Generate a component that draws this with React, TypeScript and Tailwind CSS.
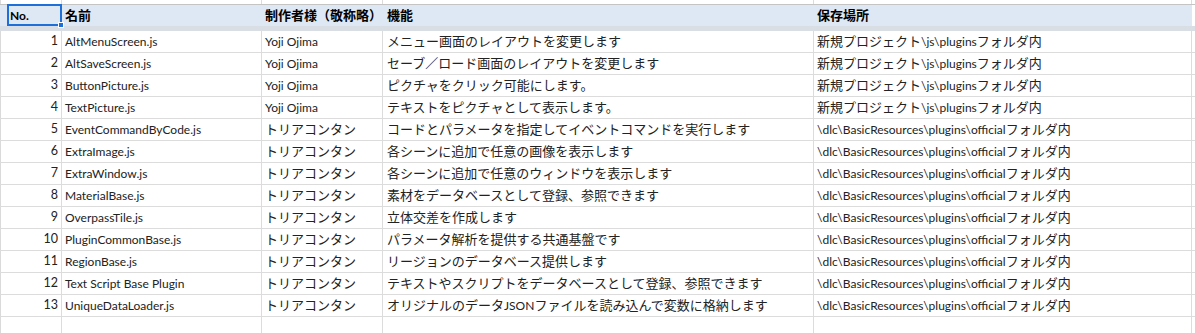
const rows: [string, string, string, string][] = [
  ['AltMenuScreen.js', 'Yoji Ojima', 'メニュー画面のレイアウトを変更します', '新規プロジェクト\\js\\pluginsフォルダ内'],
  ['AltSaveScreen.js', 'Yoji Ojima', 'セーブ／ロード画面のレイアウトを変更します', '新規プロジェクト\\js\\pluginsフォルダ内'],
  ['ButtonPicture.js', 'Yoji Ojima', 'ピクチャをクリック可能にします。', '新規プロジェクト\\js\\pluginsフォルダ内'],
  ['TextPicture.js', 'Yoji Ojima', 'テキストをピクチャとして表示します。', '新規プロジェクト\\js\\pluginsフォルダ内'],
  ['EventCommandByCode.js', 'トリアコンタン', 'コードとパラメータを指定してイベントコマンドを実行します', '\\dlc\\BasicResources\\plugins\\officialフォルダ内'],
  ['ExtraImage.js', 'トリアコンタン', '各シーンに追加で任意の画像を表示します', '\\dlc\\BasicResources\\plugins\\officialフォルダ内'],
  ['ExtraWindow.js', 'トリアコンタン', '各シーンに追加で任意のウィンドウを表示します', '\\dlc\\BasicResources\\plugins\\officialフォルダ内'],
  ['MaterialBase.js', 'トリアコンタン', '素材をデータベースとして登録、参照できます', '\\dlc\\BasicResources\\plugins\\officialフォルダ内'],
  ['OverpassTile.js', 'トリアコンタン', '立体交差を作成します', '\\dlc\\BasicResources\\plugins\\officialフォルダ内'],
  ['PluginCommonBase.js', 'トリアコンタン', 'パラメータ解析を提供する共通基盤です', '\\dlc\\BasicResources\\plugins\\officialフォルダ内'],
  ['RegionBase.js', 'トリアコンタン', 'リージョンのデータベース提供します', '\\dlc\\BasicResources\\plugins\\officialフォルダ内'],
  ['Text Script Base Plugin', 'トリアコンタン', 'テキストやスクリプトをデータベースとして登録、参照できます', '\\dlc\\BasicResources\\plugins\\officialフォルダ内'],
  ['UniqueDataLoader.js', 'トリアコンタン', 'オリジナルのデータJSONファイルを読み込んで変数に格納します', '\\dlc\\BasicResources\\plugins\\officialフォルダ内'],
]

// 列幅（右罫線込み）
const cols = ['w-[61px]', 'w-[200px]', 'w-[121px]', 'w-[431px]', 'w-[378px]']

// 半角部分だけ少し小さく（Meiryo UI 風の幅に寄せる）
function Txt({ s }: { s: string }) {
  return (
    <>
      {s.split(/([\x20-\x7e]+)/).map((p, i) =>
        /^[\x20-\x7e]+$/.test(p) ? (
          <span key={i} className="text-[12px]">{p}</span>
        ) : (
          p
        ),
      )}
    </>
  )
}

function GridRow({ h, children }: { h: string; children?: React.ReactNode[] }) {
  return (
    <div className={`flex ${h} border-l border-[#dadada]`}>
      {cols.map((w, i) => (
        <div key={i} className={`${w} flex-shrink-0 border-r border-[#dcdcdc] flex items-center overflow-hidden whitespace-nowrap`}>
          {children?.[i]}
        </div>
      ))}
    </div>
  )
}

export default function App() {
  return (
    <div
      className="w-[1195px] h-[333px] bg-white overflow-hidden text-[13px] text-[#222]"
      style={{ fontFamily: 'Lato, "Noto Sans CJK JP", sans-serif' }}
    >
      {/* 上の行（見切れ） */}
      <GridRow h="h-[4px]" />

      {/* 見出し行 */}
      <div className="border-t border-[#c4c4c4]">
        <div className="flex h-[21px] bg-[#dde8f4] w-[1192px] font-bold text-black">
          <div className="w-[62px] flex-shrink-0 relative flex items-center pl-[10px]">
            <Txt s="No." />
            <div className="absolute left-[7px] right-0 -top-[1px] bottom-0 border-2 border-[#1f6fd8]" />
            <div className="absolute -right-[2px] -bottom-[2px] w-[6px] h-[6px] bg-[#1f6fd8] border border-white" />
          </div>
          <div className="w-[200px] flex-shrink-0 flex items-center pl-[3px]">名前</div>
          <div className="w-[121px] flex-shrink-0 flex items-center pl-[3px]">制作者様（敬称略）</div>
          <div className="w-[431px] flex-shrink-0 flex items-center pl-[4px]">機能</div>
          <div className="w-[378px] flex-shrink-0 flex items-center pl-[3px]">保存場所</div>
        </div>
        <div className="h-[5px] bg-[#d9dee5]" />
      </div>

      {/* データ行 */}
      {rows.map((r, i) => (
        <div key={i} className="border-b border-[#dcdcdc]">
          <GridRow h="h-[21px]">
            {[
              <span key="n" className="w-full text-right pr-[3px] text-[12.5px]">{i + 1}</span>,
              <span key="a" className="pl-[3px]"><Txt s={r[0]} /></span>,
              <span key="b" className="pl-[3px]"><Txt s={r[1]} /></span>,
              <span key="c" className="pl-[4px]"><Txt s={r[2]} /></span>,
              <span key="d" className="pl-[3px]"><Txt s={r[3]} /></span>,
            ]}
          </GridRow>
        </div>
      ))}
      <GridRow h="h-[20px]" />
    </div>
  )
}
